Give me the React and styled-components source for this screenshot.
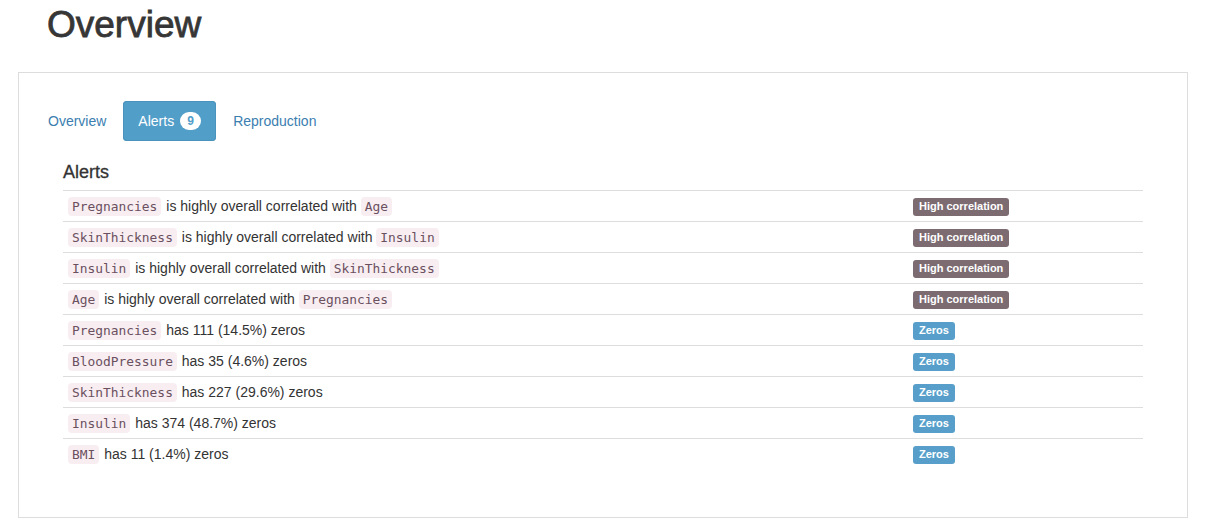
import React from "react";
import styled, { createGlobalStyle } from "styled-components";

const alerts = [
  { parts: [["Pregnancies"], " is highly overall correlated with ", ["Age"]], kind: "corr" },
  { parts: [["SkinThickness"], " is highly overall correlated with ", ["Insulin"]], kind: "corr" },
  { parts: [["Insulin"], " is highly overall correlated with ", ["SkinThickness"]], kind: "corr" },
  { parts: [["Age"], " is highly overall correlated with ", ["Pregnancies"]], kind: "corr" },
  { parts: [["Pregnancies"], " has 111 (14.5%) zeros"], kind: "zeros" },
  { parts: [["BloodPressure"], " has 35 (4.6%) zeros"], kind: "zeros" },
  { parts: [["SkinThickness"], " has 227 (29.6%) zeros"], kind: "zeros" },
  { parts: [["Insulin"], " has 374 (48.7%) zeros"], kind: "zeros" },
  { parts: [["BMI"], " has 11 (1.4%) zeros"], kind: "zeros" },
];

const App = () => {
  return (
    <>
      <GlobalStyle />
      <Title>Overview</Title>
      <Panel>
        <Tabs>
          <Tab>Overview</Tab>
          <Tab active>
            Alerts <Count>9</Count>
          </Tab>
          <Tab>Reproduction</Tab>
        </Tabs>
        <Content>
          <Heading>Alerts</Heading>
          <Table>
            <tbody>
              {alerts.map((a, i) => (
                <tr key={i}>
                  <td>
                    {a.parts.map((p, j) =>
                      Array.isArray(p) ? <Code key={j}>{p[0]}</Code> : <span key={j}>{p}</span>
                    )}
                  </td>
                  <BadgeCell>
                    <Label kind={a.kind}>
                      {a.kind === "corr" ? "High correlation" : "Zeros"}
                    </Label>
                  </BadgeCell>
                </tr>
              ))}
            </tbody>
          </Table>
        </Content>
      </Panel>
    </>
  );
};

const GlobalStyle = createGlobalStyle`
  body {
    margin: 0;
    background: #fff;
    color: #333;
    font-family: "Liberation Sans", Arial, sans-serif;
    font-size: 14px;
    line-height: 20px;
  }
  * { box-sizing: border-box; }
`;

const Title = styled.h1`
  margin: 5px 0 27px 47px;
  font-size: 37px;
  line-height: 40px;
  font-weight: 500;
  color: #363636;
  -webkit-text-stroke: 0.8px #363636;
`;

const Panel = styled.div`
  margin-left: 18px;
  width: 1170px;
  border: 1px solid #ddd;
  padding: 28px 14px;
`;

const Tabs = styled.ul`
  display: flex;
  gap: 2px;
  list-style: none;
  margin: 0;
  padding: 0;
`;

const Tab = styled.li`
  display: flex;
  align-items: center;
  height: 40px;
  padding: 10px 15px;
  border-radius: 4px;
  color: ${(p) => (p.active ? "#fff" : "#3b7eb0")};
  background: ${(p) => (p.active ? "#519ec9" : "transparent")};
  box-shadow: ${(p) => (p.active ? "inset 0 0 0 1px #4a93bd" : "none")};
`;

const Count = styled.span`
  display: inline-flex;
  align-items: center;
  justify-content: center;
  margin-left: 6px;
  width: 21px;
  height: 18px;
  border-radius: 10px;
  background: #fff;
  color: #519ec9;
  font-size: 12px;
  font-weight: 700;
`;

const Content = styled.div`
  padding: 0 30px;
`;

const Heading = styled.h4`
  margin: 21px 0 8px;
  font-size: 18px;
  line-height: 20px;
  font-weight: 500;
  color: #333;
  -webkit-text-stroke: 0.3px #333;
`;

const Table = styled.table`
  width: 100%;
  border-collapse: collapse;
  margin-bottom: 20px;
  td {
    padding: 5px;
    border-top: 1px solid #ddd;
    vertical-align: top;
    line-height: 20px;
  }
`;

const BadgeCell = styled.td`
  width: 235px;
`;

const Code = styled.code`
  padding: 2px 4px;
  margin-right: 1px;
  border-radius: 4px;
  background: #f8eef2;
  color: #6b5060;
  font-family: "DejaVu Sans Mono", monospace;
  font-size: 12.9px;
  line-height: 14px;
  vertical-align: 0;
`;

const Label = styled.span`
  display: inline-block;
  vertical-align: top;
  margin-top: 2px;
  padding: 3px 6px 4px;
  border-radius: 3px;
  font-size: 11px;
  line-height: 11px;
  font-weight: 700;
  color: #fff;
  background: ${(p) => (p.kind === "corr" ? "#7d6b72" : "#579fca")};
`;

export default App;
